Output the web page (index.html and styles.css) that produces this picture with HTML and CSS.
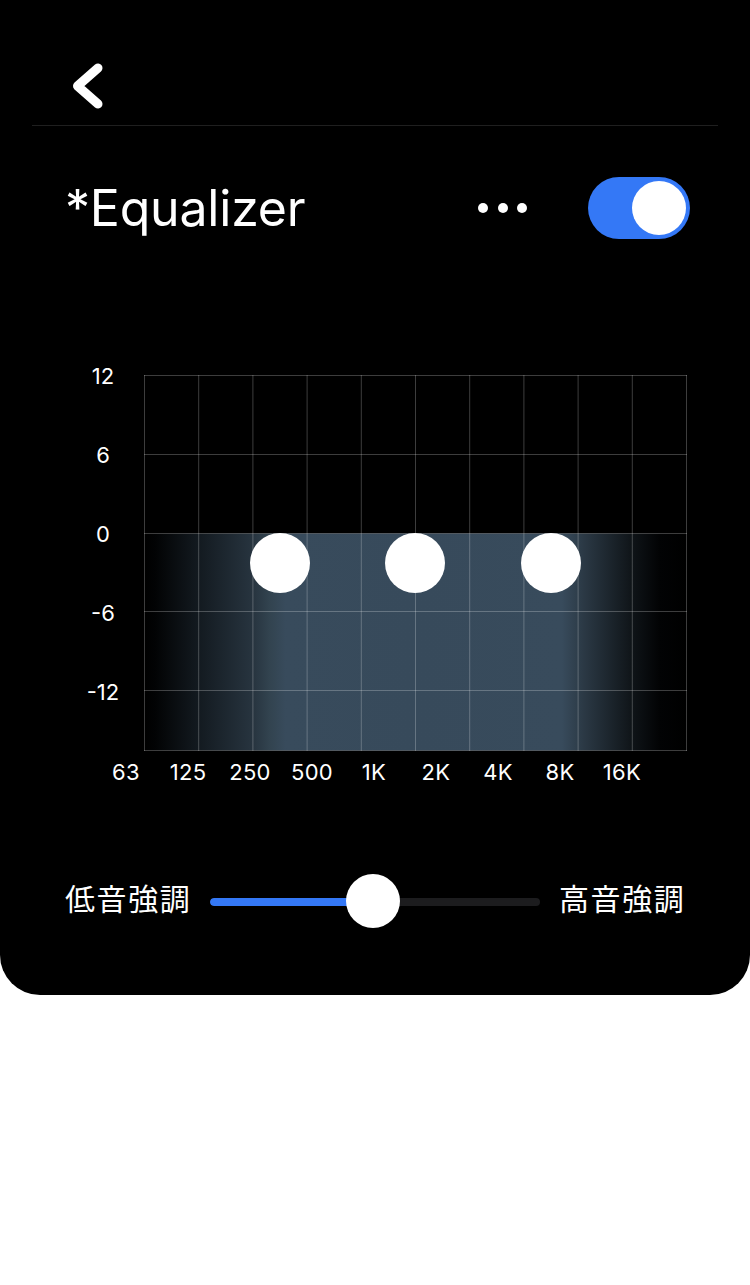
FILE: index.html
```html
<!DOCTYPE html>
<html lang="ja">
<head>
<meta charset="utf-8">
<title>Equalizer</title>
<link rel="stylesheet" href="styles.css">
</head>
<body>
<main class="panel">
  <header class="header">
    <button class="back" aria-label="戻る">
      <svg width="50" height="60" viewBox="60 55 50 60">
        <path d="M98 68 L77.5 86 L98 104" fill="none" stroke="#fff" stroke-width="9" stroke-linecap="round" stroke-linejoin="round"/>
      </svg>
    </button>
  </header>

  <section class="title-row">
    <h1 class="title">*Equalizer</h1>
    <div class="more" aria-label="more"><span></span><span></span><span></span></div>
    <div class="toggle on"><div class="knob"></div></div>
  </section>

  <section class="graph">
    <div class="y-axis">
      <span>12</span><span>6</span><span>0</span><span>-6</span><span>-12</span>
    </div>
    <svg class="plot" width="543" height="377" viewBox="0 0 543 377">
      <defs>
        <linearGradient id="fill" x1="0" x2="1" y1="0" y2="0">
          <stop offset="0" stop-color="#000"/>
          <stop offset="0.02" stop-color="#020304"/>
          <stop offset="0.1" stop-color="#131a20"/>
          <stop offset="0.2" stop-color="#27343f"/>
          <stop offset="0.23" stop-color="#32434f"/>
          <stop offset="0.26" stop-color="#384b5c"/>
          <stop offset="0.5" stop-color="#374a5b"/>
          <stop offset="0.77" stop-color="#384b5c"/>
          <stop offset="0.81" stop-color="#2b3945"/>
          <stop offset="0.9" stop-color="#0f1418"/>
          <stop offset="0.95" stop-color="#020304"/>
          <stop offset="1" stop-color="#000"/>
        </linearGradient>
      </defs>
      <rect x="0.5" y="158.5" width="542" height="217" fill="url(#fill)"/>
      <g stroke="rgba(255,255,255,0.24)" stroke-width="1" fill="none">
        <line x1="0.5" y1="0" x2="0.5" y2="376"/>
        <line x1="54.7" y1="0" x2="54.7" y2="376"/>
        <line x1="108.9" y1="0" x2="108.9" y2="376"/>
        <line x1="163.1" y1="0" x2="163.1" y2="376"/>
        <line x1="217.3" y1="0" x2="217.3" y2="376"/>
        <line x1="271.5" y1="0" x2="271.5" y2="376"/>
        <line x1="325.7" y1="0" x2="325.7" y2="376"/>
        <line x1="379.9" y1="0" x2="379.9" y2="376"/>
        <line x1="434.1" y1="0" x2="434.1" y2="376"/>
        <line x1="488.3" y1="0" x2="488.3" y2="376"/>
        <line x1="542.5" y1="0" x2="542.5" y2="376"/>
        <line x1="0" y1="0.5" x2="543" y2="0.5"/>
        <line x1="0" y1="79.5" x2="543" y2="79.5"/>
        <line x1="0" y1="158.5" x2="543" y2="158.5"/>
        <line x1="0" y1="236.5" x2="543" y2="236.5"/>
        <line x1="0" y1="315.5" x2="543" y2="315.5"/>
        <line x1="0" y1="375.5" x2="543" y2="375.5"/>
      </g>
      <g fill="#fff">
        <circle cx="136" cy="188" r="30"/>
        <circle cx="271" cy="188" r="30"/>
        <circle cx="407" cy="188" r="30"/>
      </g>
    </svg>
  </section>

  <div class="x-axis">
    <span>63</span><span>125</span><span>250</span><span>500</span><span>1K</span><span>2K</span><span>4K</span><span>8K</span><span>16K</span>
  </div>

  <section class="tone">
    <span class="tone-label">低音強調</span>
    <div class="slider">
      <div class="track"><div class="track-fill" style="width: 49.4%"></div></div>
      <div class="slider-knob" style="left: 49.4%"></div>
    </div>
    <span class="tone-label">高音強調</span>
  </section>
</main>
</body>
</html>
```

FILE: styles.css
```css
* { box-sizing: border-box; }
html, body { margin: 0; padding: 0; background: #fff; }
body {
  font-family: "Inter", "Roboto", "Noto Sans CJK JP", sans-serif;
  color: #fff;
  width: 750px;
}
.panel {
  width: 750px;
  height: 995px;
  background: #000;
  border-radius: 0 0 40px 40px;
  display: flex;
  flex-direction: column;
}
.header {
  height: 126px;
  margin: 0 32px;
  border-bottom: 1px solid #1f1f1f;
  display: flex;
  align-items: flex-start;
}
.back {
  margin: 55px 0 0 28px;
  padding: 0;
  border: 0;
  background: none;
  width: 50px;
  height: 60px;
  display: block;
}
.back svg { display: block; }

.title-row {
  margin-top: 51px;
  height: 62px;
  display: flex;
  align-items: center;
  padding-left: 65px;
}
.title {
  margin: 0;
  font-weight: 400;
  font-size: 50px;
  letter-spacing: -0.2px;
  line-height: 62px;
  flex: 1;
}
.more {
  display: flex;
  gap: 9.5px;
  margin-right: 61px;
}
.more span {
  width: 10px;
  height: 10px;
  border-radius: 50%;
  background: #fff;
}
.toggle {
  width: 102px;
  height: 62px;
  border-radius: 31px;
  background: #3478f6;
  margin-right: 60px;
  display: flex;
  align-items: center;
  justify-content: flex-end;
  padding-right: 4px;
}
.knob {
  width: 54px;
  height: 54px;
  border-radius: 50%;
  background: #fff;
}

.graph {
  margin-top: 136px;
  display: flex;
  align-items: flex-start;
}
.y-axis {
  margin-left: 80px;
  width: 46px;
  margin-top: -10px;
  margin-right: 18px;
  display: flex;
  flex-direction: column;
}
.y-axis span {
  height: 79px;
  line-height: 22px;
  font-size: 22px;
  text-align: center;
}
.plot { display: block; }

.x-axis {
  margin-top: -1px;
  padding-left: 95px;
  display: flex;
}
.x-axis span {
  width: 62px;
  text-align: center;
  font-size: 22px;
  line-height: 26px;
  letter-spacing: 0.3px;
}

.tone {
  margin-top: 89px;
  height: 54px;
  display: flex;
  align-items: center;
  padding-left: 65px;
}
.tone-label {
  font-family: "Noto Sans CJK JP", sans-serif;
  font-size: 30px;
  letter-spacing: 1.6px;
  width: 125px;
  white-space: nowrap;
  line-height: 40px;
  padding-bottom: 8px;
}
.slider {
  position: relative;
  width: 330px;
  height: 54px;
  margin: 0 19px 0 20px;
  display: flex;
  align-items: center;
}
.track {
  width: 100%;
  height: 8px;
  border-radius: 4px;
  background: #1c1c1e;
  overflow: hidden;
  margin-top: 2px;
}
.track-fill {
  height: 100%;
  background: #3478f6;
  border-radius: 4px;
}
.slider-knob {
  position: absolute;
  top: 0;
  width: 54px;
  height: 54px;
  margin-left: -27px;
  border-radius: 50%;
  background: #fff;
}
```
